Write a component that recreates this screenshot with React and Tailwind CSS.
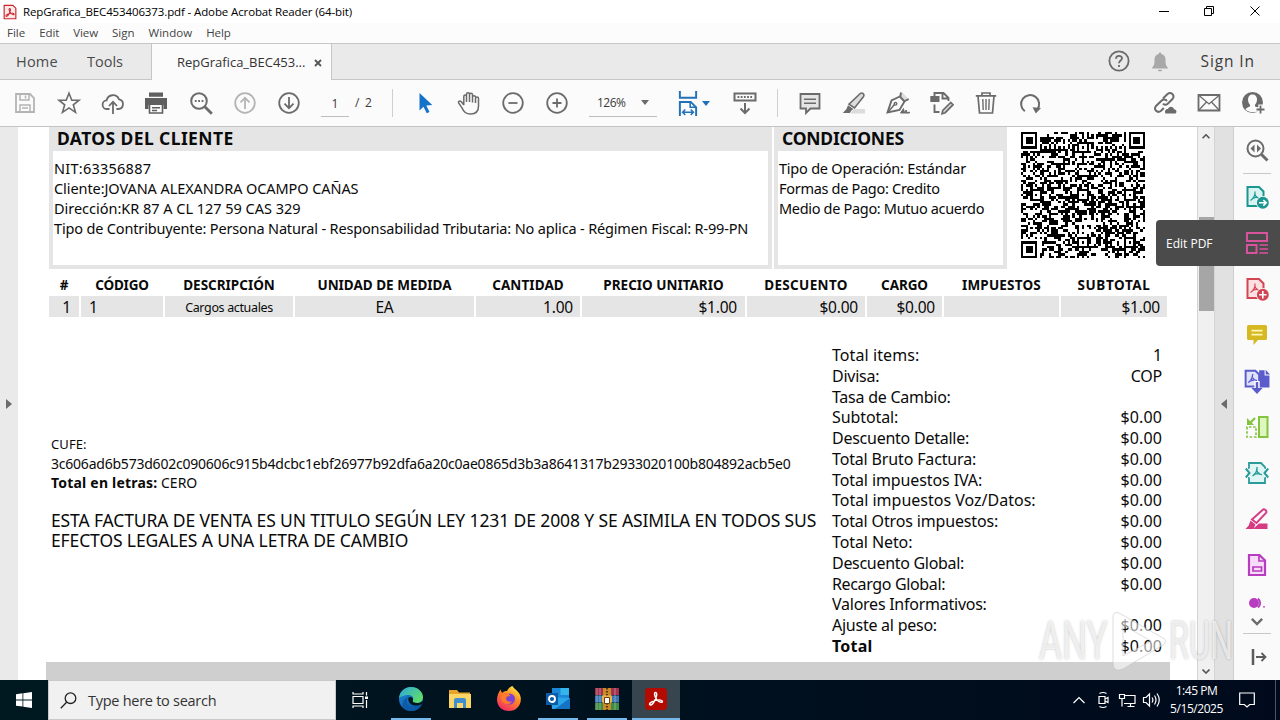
import clsx from 'clsx';

const Icon = ({ size = 24, className, children, ...rest }) => (
  <svg
    width={size}
    height={size}
    viewBox="0 0 24 24"
    fill="none"
    stroke="currentColor"
    strokeWidth="1.8"
    className={clsx('shrink-0', className)}
    {...rest}
  >
    {children}
  </svg>
);

/* ---------- Toolbar icons ---------- */

const SaveIcon = () => (
  <Icon className="text-[#b4b4b4]">
    <path d="M3 3h14l4 4v14H3z" />
    <path d="M7 3v6h9V3M12.500 4.500v3M7 21v-7h10v7M9 17h6" strokeWidth="1.500" />
  </Icon>
);

const StarIcon = () => (
  <Icon className="text-[#6b6b6b]">
    <path d="M12 2.200l2.800 7h7.300l-5.800 4.600 2.200 7.600L12 16.900l-6.500 4.500 2.200-7.600L1.900 9.200h7.300z" strokeWidth="1.600" />
  </Icon>
);

const CloudUpIcon = () => (
  <Icon className="text-[#6b6b6b]">
    <path d="M8.500 18H6.200a4.300 4.300 0 0 1-.6-8.600A6.500 6.500 0 0 1 18 8.300a4.900 4.900 0 0 1-.6 9.700h-2" />
    <path d="M12 23V11M8 15l4-4.300 4 4.300" />
  </Icon>
);

const PrintIcon = () => (
  <Icon className="mr-0.5 text-[#5f5f5f]">
    <path d="M5 1.500h14v4.300H5zM1 7h22v11h-3.500v-4h-15v4H1z" fill="currentColor" stroke="none" />
    <path d="M5.500 14v8h13v-8M8 16.800h8M8 19.500h5" strokeWidth="1.600" />
  </Icon>
);

const FindIcon = () => (
  <Icon className="text-[#6b6b6b]">
    <circle cx="10" cy="10" r="7.800" strokeWidth="2" />
    <path d="M15.800 15.800l7 7" strokeWidth="2.800" />
    <path d="M5.800 10h1.800M9.200 10H11M12.600 10h1.800" strokeWidth="1.800" />
  </Icon>
);

const CircleArrowIcon = ({ up, className }) => (
  <Icon className={className}>
    <circle cx="12" cy="12" r="9.800" />
    <path d={up ? 'M12 18V7M7.500 11.300L12 6.800l4.500 4.500' : 'M12 6v11M7.500 12.700l4.500 4.500 4.500-4.500'} />
  </Icon>
);

const PointerIcon = () => (
  <Icon className="text-[#1473c8]">
    <path d="M6.500 2v17.500l4-3.800 3.200 6.500 2.800-1.300-3.200-6.300 6-.6z" fill="currentColor" stroke="none" />
  </Icon>
);

const HandIcon = () => (
  <Icon className="text-[#6b6b6b]">
    <path
      d="M6.800 14V5.500c0-2 2.700-2 2.700 0V11 3.300c0-2 3-2 3 0V11 3.800c0-2 3-2 3 0V11.500 6.300c0-2 3-2 3 0 M21.500 8.500V15c0 5.500-3.500 8-7.800 8-5.200 0-7-2.500-8.900-6.400L1.600 12c-.7-1.800 1.500-2.600 2.700-1.200L6.800 14M18.500 12V7.500c0-2 3-2 3 0v1.500"
      strokeWidth="1.500"
    />
  </Icon>
);

const ZoomStepIcon = ({ plus }) => (
  <Icon className="text-[#6b6b6b]">
    <circle cx="12" cy="12" r="9.800" />
    <path d={plus ? 'M7.500 12h9M12 7.500v9' : 'M7.500 12h9'} />
  </Icon>
);

const FitWidthIcon = () => (
  <Icon className="text-[#2071b8]" size={26}>
    <path d="M4.500 1v6.200h15V1M4.500 24V11h10l5 5v8" />
    <path d="M14 11v5h5.500M7.500 20.500h9M9.500 18l-2.500 2.500L9.500 23M14.500 18l2.500 2.500-2.500 2.500" strokeWidth="1.400" />
  </Icon>
);

const KeyboardIcon = () => (
  <Icon className="text-[#6b6b6b]">
    <path d="M1.500 2.500h21v7h-21z" strokeWidth="2" />
    <path d="M4.500 6h15" strokeWidth="2" strokeDasharray="1.800 1.400" />
    <path d="M12 12v9.500M7.500 17.500l4.500 4.500 4.500-4.500" strokeWidth="2" />
  </Icon>
);

const CommentIcon = () => (
  <Icon className="text-[#6b6b6b]">
    <path d="M2.500 3h19v14.500h-9L8 22v-4.500H2.500z" fill="#e4e4e4" />
    <path d="M6 8.300h12M6 12.300h12" strokeWidth="1.400" />
  </Icon>
);

const HighlightIcon = () => (
  <Icon className="text-[#6b6b6b]">
    <path d="M12 18h11v4.500H8z" fill="#dcdcdc" stroke="none" />
    <path d="M18.300 2.500c1.800-1.500 4.700 1 3.300 3L12.500 17 7 13.200z" fill="#dcdcdc" strokeWidth="1.600" />
    <path d="M6 14.300l5.300 3.800-2 1.700-1.500 2.200H.8l3.500-3.800z" fill="currentColor" stroke="none" />
  </Icon>
);

const SignIcon = () => (
  <Icon className="text-[#6b6b6b]">
    <path d="M16 1l-1.500 4.500 4.500 5L22.500 8z" fill="#dcdcdc" stroke="none" />
    <path d="M15 1.500l-.7 4M18.700 10l4-1.800" strokeWidth="1.900" />
    <path d="M13.800 5.500L5.500 9.500 1.500 21.500 13.500 19l5-8.500z" strokeWidth="1.900" />
    <path d="M2 21l6.500-7.500" strokeWidth="1.600" />
    <circle cx="9.500" cy="12.800" r="1.300" strokeWidth="1.400" />
    <path d="M14.500 22l3-4.500.8 4 2-2.500.8 3 2.400-1v1z" fill="currentColor" strokeWidth="1" />
  </Icon>
);

const EditPageIcon = () => (
  <Icon className="text-[#6b6b6b]">
    <path d="M.3 5h9.200v6H.3z" fill="currentColor" stroke="none" />
    <path d="M4.500 5V2h9l5 5v3M12.500 2v5.500h6M4.500 13.500V21h5" strokeWidth="1.900" />
    <path d="M20.800 11.500l2.200 2.200-7.800 8-3.200 1 .8-3.300z" fill="#dcdcdc" strokeWidth="1.700" />
  </Icon>
);

const TrashIcon = () => (
  <Icon className="text-[#6b6b6b]">
    <path d="M1.800 4.800h20.400M8 4.500V2h8v2.500M4 5l1.500 17h13L20 5" strokeWidth="1.700" />
    <path d="M8.800 8l.4 11M12 8v11M15.200 8l-.4 11" strokeWidth="1.400" />
  </Icon>
);

const RotateIcon = () => (
  <Icon className="text-[#6b6b6b]">
    <path d="M6.800 20.300A9 9 0 1 1 19.300 18.500" strokeWidth="2" />
    <path d="M14.500 16.200l8.500.8-5.200 5.600z" fill="currentColor" stroke="none" />
  </Icon>
);

const LinkCloudIcon = () => (
  <Icon className="text-[#6b6b6b]">
    <path d="M10 7.500l4.500-4.500c3.500-2.800 7.800 1.300 5 5l-4.800 4.700c-1.500 1.300-3.500 1-4.800 0" strokeWidth="2" />
    <path d="M14 10c-1.500-1.800-4-1.800-5.500-.3L3 15c-2.700 3.500 1.300 7.500 4.800 5l3-3" strokeWidth="2" />
    <path d="M12.500 22.500c-1.500-2.800.8-4.800 2.500-4.500 1-3.300 5.500-3 6 .3 3 .2 3 3.500 1.500 4.200z" fill="currentColor" stroke="none" />
  </Icon>
);

const MailIcon = () => (
  <Icon className="text-[#6b6b6b]">
    <path d="M1.500 4h21v15.500h-21z" />
    <path d="M2 4.500l10 8.500 10-8.500M2 19l7.500-8M22 19l-7.500-8" strokeWidth="1.300" />
  </Icon>
);

const AddUserIcon = () => (
  <Icon className="text-[#6b6b6b]">
    <circle cx="11.500" cy="11.500" r="10.500" fill="currentColor" stroke="none" />
    <path
      d="M11.500 3.500c3 0 4.500 2 4.500 5 0 2.300-.8 4-2 5.200v1.800c2 .8 4 1.500 4.500 3-4 3.500-10 3.500-14 0 .5-1.500 2.500-2.200 4.500-3v-1.800C7.800 12.500 7 10.800 7 8.500c0-3 1.500-5 4.500-5z"
      fill="#fbfbfb"
      stroke="none"
    />
    <path d="M14 18.500h10M19.500 13.500v10" stroke="#fbfbfb" strokeWidth="4.500" />
    <path d="M15.500 18.500h8M19.500 14.500v8" />
  </Icon>
);

/* ---------- Right rail icons ---------- */

const PdfSheet = ({ fill = 'none' }) => (
  <>
    <path d="M2.500 2h11.500l4.500 4.500V21h-16z" fill={fill} strokeWidth="2" />
    <path d="M10 6.500c.3 3.500-1.300 7-4.500 9M10 9.500c.8 2.300 2.800 3.800 5 4M7.500 13.500l5-1.500" strokeWidth="1.200" />
  </>
);

const BadgedPdfIcon = ({ fill, badge, className }) => (
  <Icon className={className}>
    <PdfSheet fill={fill} />
    <circle cx="17.800" cy="17.800" r="6.800" fill="#fafafa" stroke="none" />
    <circle cx="17.800" cy="17.800" r="6" fill="currentColor" stroke="none" />
    <path d={badge} stroke="#fff" strokeWidth="1.600" />
  </Icon>
);

const ReplaceViewIcon = () => (
  <Icon className="text-[#6b6b6b]">
    <circle cx="10.500" cy="10.500" r="8" strokeWidth="2" />
    <path d="M16.500 16.500l6 6" strokeWidth="3" />
    <path d="M9.500 6.500v8l-4-4zM12 6.500v8l4-4z" fill="currentColor" stroke="none" />
  </Icon>
);

const EditPdfIcon = () => (
  <Icon className="text-[#d8529e]">
    <path d="M2 2h20v8H2zM2 14h9.500v8H2z" strokeWidth="2" />
    <path d="M14.500 14H23M14.500 18H23M14.500 22H23" strokeWidth="1.500" />
  </Icon>
);

const NoteIcon = () => (
  <Icon className="text-[#d5b822]">
    <path d="M3.500 2h17q1.500 0 1.500 1.500v12q0 1.500-1.500 1.500H13l-4.500 5V17h-5Q2 17 2 15.500v-12Q2 2 3.500 2z" fill="currentColor" stroke="none" />
    <path d="M6.500 7.700h11M6.500 11.700h11" stroke="#fff7b8" />
  </Icon>
);

const CombineIcon = () => (
  <Icon className="text-[#5b5ccb]" size={26}>
    <path d="M14 2h5v5h4.500v11H14z M20 1.500V6h4z" fill="currentColor" stroke="none" />
    <path d="M1.500 2.500h9L14 6v11H1.500z" fill="#e0e2fa" />
    <path d="M8 5.500c0 3.500-1.500 6-4 8M8 9c.8 1.800 2 2.500 4 2.700M5.500 12l4-1" strokeWidth="1.200" />
    <path d="M12 12v9" stroke="#fafafa" strokeWidth="5" />
    <path d="M12 13v7" strokeWidth="2.200" />
    <path d="M6.800 18.500h10.400L12 24z" fill="currentColor" stroke="none" />
  </Icon>
);

const OrganizeIcon = () => (
  <Icon className="text-[#84c340]">
    <path d="M14 2h8.500v20H14z" fill="#def6bf" strokeWidth="2" />
    <path d="M2 12v10h9V12z" strokeWidth="1.700" strokeDasharray="2.500 1.700" />
    <path d="M2 3v7h7L6.800 7.700l4-4-1.500-1.500-4 4z" fill="currentColor" stroke="none" />
  </Icon>
);

const CompressIcon = () => (
  <Icon className="text-[#2a9b98]">
    <path d="M4 8V2h12l4 4v2M4 16v6h16v-6" fill="#e0f6f4" />
    <path d="M4 7.500h16v9H4z" fill="#e0f6f4" stroke="none" />
    <path d="M.8 7.500L4.500 12 .8 16.500M23.200 7.500L19.500 12l3.700 4.500" strokeWidth="2" />
    <path d="M12 6c.4 3.500-1.700 7-4.500 9M12 10c.8 2 2.500 3.500 5 3.600M9 13.200l6-.8" strokeWidth="1.400" />
  </Icon>
);

const RedactIcon = () => (
  <Icon className="text-[#d63a83]">
    <path d="M14 16.500h8.500V22H8z" fill="currentColor" stroke="none" />
    <path d="M17.500 3c1.800-1.700 5 .8 3.500 3L11.500 16 7 12.500z" strokeWidth="1.900" />
    <path d="M5.500 13.500l5 4L8.500 22H.5l3.200-3.500z" fill="currentColor" stroke="none" />
  </Icon>
);

const FormIcon = () => (
  <Icon className="text-[#b83cc0]">
    <path d="M4 2h10.500L20 7.500V22H4z" fill="#f7dcf9" strokeWidth="2.200" />
    <path d="M14 2v6h6M8 14h8.500v4H8z" strokeWidth="1.700" />
  </Icon>
);

const MoreToolIcon = () => (
  <svg width="18" height="12" viewBox="0 0 18 12" className="text-[#b83cc0]">
    <circle cx="6" cy="6" r="5" fill="currentColor" />
    <path d="M10 1.500q4.500 4.500 0 9" fill="none" stroke="currentColor" strokeWidth="1.800" />
    <circle cx="16" cy="9.800" r=".9" fill="currentColor" />
  </svg>
);

const RAIL = [
  <BadgedPdfIcon key="export" className="text-[#1c9690]" fill="#d9f3f1" badge="M14 17.800h7M18.300 15l2.900 2.800-2.900 2.800" />,
  <EditPdfIcon key="edit" />,
  <BadgedPdfIcon key="create" className="text-[#d24653]" fill="#fde0e2" badge="M14.100 17.800h7.400M17.800 14.100v7.400" />,
  <NoteIcon key="note" />,
  <CombineIcon key="combine" />,
  <OrganizeIcon key="organize" />,
  <CompressIcon key="compress" />,
  <RedactIcon key="redact" />,
  <FormIcon key="form" />,
];

/* ---------- QR code ---------- */

const QR_SIZE = 53;

// true / false inside function patterns, null for data modules
function functionModule(x, y) {
  const corners = [[0, 0], [QR_SIZE - 7, 0], [0, QR_SIZE - 7]];
  for (const [cx, cy] of corners) {
    const d = Math.max(Math.abs(x - cx - 3), Math.abs(y - cy - 3));
    if (d <= 4) return d === 3 || d <= 1;
  }
  for (const [cx, cy] of [[26, 26], [46, 46], [26, 46], [46, 26], [26, 6], [6, 26]]) {
    const d = Math.max(Math.abs(x - cx), Math.abs(y - cy));
    if (d <= 2) return d !== 1;
  }
  if (x === 6 || y === 6) return (x + y) % 2 === 0;
  return null;
}

function qrPath() {
  let seed = 453406373;
  let d = '';
  for (let y = 0; y < QR_SIZE; y++) {
    for (let x = 0; x < QR_SIZE; x++) {
      seed = (Math.imul(seed, 1664525) + 1013904223) >>> 0;
      const on = functionModule(x, y) ?? seed >>> 16 & 1;
      if (on) d += `M${x} ${y}h1v1h-1z`;
    }
  }
  return d;
}

const QrCode = () => (
  <svg width="124" height="126" viewBox={`0 0 ${QR_SIZE} ${QR_SIZE}`} preserveAspectRatio="none">
    <path d={qrPath()} fill="#000" shapeRendering="crispEdges" />
  </svg>
);

/* ---------- Window chrome ---------- */

const AcrobatMark = ({ className }) => (
  <path
    className={className}
    d="M11.500 5c2 0 1.500 4-.5 8-1.500 3-4 6-5.500 5.500-2-1 1.500-4 6.500-5 4-.8 7-.3 7 1.200 0 1.800-3.500.8-6-2S9.500 5 11.500 5z"
    fill="none"
  />
);

function TitleBar() {
  return (
    <header className="flex h-[23px] items-center bg-white text-black">
      <svg width="14" height="16" viewBox="0 0 24 26" className="ml-[3px]">
        <path d="M2 1.500h15l5 5v18H2z" fill="#fde9e9" stroke="#c8262c" strokeWidth="2" />
        <g transform="translate(0 2)" stroke="#c8262c" strokeWidth="1.800"><AcrobatMark /></g>
      </svg>
      <span className="ml-1.5 text-[11.500px] tracking-[-0.12px]">RepGrafica_BEC453406373.pdf - Adobe Acrobat Reader (64-bit)</span>
      <svg width="104" height="12" viewBox="0 0 104 12" fill="none" stroke="#000" className="mr-[18px] -mt-0.5 ml-auto">
        <path d="M1 6.500h10M46.500 3.500h7v7h-7zM48.500 3.500v-2h7v7h-2M92.500 1.500l9 9M101.500 1.500l-9 9" />
      </svg>
    </header>
  );
}

function MenuBar() {
  return (
    <nav className="flex h-5 items-center gap-3.5 bg-[#fcfcfc] pl-[7px] text-[11.500px] text-[#444]">
      <span>File</span>
      <span className="tracking-[-0.1px]">Edit</span>
      <span className="tracking-[-0.1px]">View</span>
      <span>Sign</span>
      <span className="tracking-[0.05px]">Window</span>
      <span className="tracking-[-0.1px]">Help</span>
    </nav>
  );
}

function TabBar() {
  return (
    <div className="flex h-[37px] items-center border-y border-[#c6c6c6] bg-[#eaeaea] text-[#4a4a4a]">
      <span className="w-[71px] pl-4 text-[14.500px] tracking-[0.2px]">Home</span>
      <span className="w-20 pl-4 text-[14.500px]">Tools</span>
      <div className="-mb-0.5 flex h-[37px] w-[181px] items-center border-x border-[#c6c6c6] bg-[#fbfbfb] pl-[25px] text-[#333]">
        <span className="w-[137px] text-[13px]">RepGrafica_BEC453...</span>
        <svg width="8" height="8" viewBox="0 0 8 8" stroke="#555" strokeWidth="1.800"><path d="M1 1l6 6M7 1L1 7" /></svg>
      </div>
      <Icon className="-mt-0.5 ml-auto text-[#6b6b6b]">
        <circle cx="12" cy="12" r="9.600" />
        <path d="M9 9.800c0-4 6-3.600 6-.5 0 2.200-3 2.300-3 5M12 16v2" />
      </Icon>
      <Icon size={22} className="mr-[19px] ml-[18px] text-[#a8a8a8]">
        <path d="M12 1.500c1 0 1.500.6 1.500 1.800 3 .8 4.500 3 4.500 6 0 5 .5 7 3.200 9.700H2.800C5.500 16.300 6 14.300 6 9.300c0-3 1.500-5.200 4.500-6C10.500 2.100 11 1.500 12 1.500zM9.500 20.500h5c-.5 2.500-4.500 2.500-5 0z" fill="currentColor" stroke="none" />
      </Icon>
      <span className="mr-[25px] ml-[11px] text-[15.500px] tracking-[0.9px] text-[#3c3c3c]">Sign In</span>
    </div>
  );
}

const Tool = ({ children }) => <div className="flex w-11 justify-center">{children}</div>;
const Divider = ({ className }) => <div className={clsx('h-7 w-px bg-[#cfcfcf]', className)} />;
const Caret = ({ className }) => (
  <svg width="8" height="5" viewBox="0 0 8 5" className={className}><path d="M0 0h8L4 5z" fill="currentColor" /></svg>
);

function Toolbar() {
  return (
    <div className="flex h-[47px] items-center border-b border-[#c4c4c4] bg-[#fbfbfb] pl-[3px] text-[#3a3a3a]">
      <Tool><SaveIcon /></Tool>
      <Tool><StarIcon /></Tool>
      <Tool><CloudUpIcon /></Tool>
      <Tool><PrintIcon /></Tool>
      <Tool><FindIcon /></Tool>
      <Tool><CircleArrowIcon up className="text-[#b4b4b4]" /></Tool>
      <Tool><CircleArrowIcon className="text-[#6b6b6b]" /></Tool>
      <div className="ml-2.5 h-[27px] w-7 border-b border-[#bdbdbd] text-center text-xs leading-[27px]">1</div>
      <span className="ml-1.5 w-[37px] text-xs tracking-[1.2px]">/ 2</span>
      <Divider />
      <div className="ml-[10px] flex">
        <Tool><PointerIcon /></Tool>
        <Tool><HandIcon /></Tool>
        <Tool><ZoomStepIcon /></Tool>
        <Tool><ZoomStepIcon plus /></Tool>
      </div>
      <div className="ml-2.5 flex h-[27px] w-[68px] items-center justify-between border-b border-[#bdbdbd] px-2 text-xs">
        <span className="tracking-[-0.5px]">126%</span>
        <Caret className="text-[#6b6b6b]" />
      </div>
      <div className="ml-[18px] flex w-[48px] items-center gap-px">
        <FitWidthIcon />
        <Caret className="text-[#2071b8]" />
      </div>
      <Tool><KeyboardIcon /></Tool>
      <Divider className="ml-[10px]" />
      <div className="ml-[10px] flex">
        <Tool><CommentIcon /></Tool>
        <Tool><HighlightIcon /></Tool>
        <Tool><SignIcon /></Tool>
        <Tool><EditPageIcon /></Tool>
        <Tool><TrashIcon /></Tool>
        <Tool><RotateIcon /></Tool>
      </div>
      <div className="mr-[5px] ml-auto flex">
        <Tool><LinkCloudIcon /></Tool>
        <Tool><MailIcon /></Tool>
        <Tool><AddUserIcon /></Tool>
      </div>
    </div>
  );
}

/* ---------- Invoice page ---------- */

function InfoBox({ title, titleClass, className, children }) {
  return (
    <section className={clsx('h-[142px] border-4 border-t-0 border-[#e5e5e5] text-[14.500px] leading-5', className)}>
      <h2 className={clsx('h-6 bg-[#e5e5e5] text-[17.500px] leading-[22px] font-bold', titleClass)}>{title}</h2>
      <div className="pt-[7px] pl-px whitespace-nowrap">{children}</div>
    </section>
  );
}

const COLUMNS = [
  { head: '#', value: '1', width: 'w-[30px]', headClass: '', cell: 'text-right pr-2' },
  { head: 'CÓDIGO', value: '1', width: 'w-[82px]', headClass: 'tracking-[-0.2px]', cell: 'pl-2' },
  { head: 'DESCRIPCIÓN', value: 'Cargos actuales', width: 'w-[128px]', headClass: 'tracking-[0px]', cell: 'text-center', small: true },
  { head: 'UNIDAD DE MEDIDA', value: 'EA', width: 'w-[179px]', headClass: 'tracking-[0px]', cell: 'text-center' },
  { head: 'CANTIDAD', value: '1.00', width: 'w-[104px]', headClass: 'tracking-[0.1px]', cell: 'text-right pr-[7px]' },
  { head: 'PRECIO UNITARIO', value: '$1.00', width: 'w-[163px]', headClass: 'tracking-[0px]', cell: 'text-right pr-2' },
  { head: 'DESCUENTO', value: '$0.00', width: 'w-[118px]', headClass: 'tracking-[0.35px]', cell: 'text-right pr-[7px]' },
  { head: 'CARGO', value: '$0.00', width: 'w-[75px]', headClass: 'tracking-[-0.1px]', cell: 'text-right pr-[7px]' },
  { head: 'IMPUESTOS', value: '', width: 'w-[115px]', headClass: 'tracking-[0.2px]', cell: '' },
  { head: 'SUBTOTAL', value: '$1.00', width: 'w-[106px]', headClass: 'tracking-[0.6px]', cell: 'text-right pr-[7px]' },
];

function ItemsTable() {
  return (
    <div className="mt-[7px] ml-[31px] flex gap-0.5 whitespace-nowrap">
      {COLUMNS.map((col) => (
        <div key={col.head} className={clsx('shrink-0', col.width)}>
          <div className={clsx('h-5 text-center text-[13.500px] leading-[18px] font-bold', col.headClass)}>{col.head}</div>
          <div
            className={clsx(
              'h-[21px] bg-[#e5e5e5] leading-[23px]',
              col.small ? 'text-[12.500px] tracking-[-0.35px]' : 'text-[15.500px] tracking-[-0.2px]',
              col.cell
            )}
          >
            {col.value}
          </div>
        </div>
      ))}
    </div>
  );
}

const TOTALS = [
  { label: 'Total items:', value: '1', tracking: 'tracking-[0.08px]' },
  { label: 'Divisa:', value: 'COP', tracking: 'tracking-[-0.25px]' },
  { label: 'Tasa de Cambio:', value: '', tracking: 'tracking-[-0.25px]' },
  { label: 'Subtotal:', value: '$0.00', tracking: 'tracking-[-0.1px]' },
  { label: 'Descuento Detalle:', value: '$0.00', tracking: 'tracking-[-0.25px]' },
  { label: 'Total Bruto Factura:', value: '$0.00', tracking: 'tracking-[-0.15px]' },
  { label: 'Total impuestos IVA:', value: '$0.00', tracking: 'tracking-[-0.1px]' },
  { label: 'Total impuestos Voz/Datos:', value: '$0.00', tracking: 'tracking-[0px]' },
  { label: 'Total Otros impuestos:', value: '$0.00', tracking: 'tracking-[-0.15px]' },
  { label: 'Total Neto:', value: '$0.00', tracking: 'tracking-[-0.1px]' },
  { label: 'Descuento Global:', value: '$0.00', tracking: 'tracking-[-0.3px]' },
  { label: 'Recargo Global:', value: '$0.00', tracking: 'tracking-[-0.35px]' },
  { label: 'Valores Informativos:', value: '', tracking: 'tracking-[-0.25px]' },
  { label: 'Ajuste al peso:', value: '$0.00', tracking: 'tracking-[-0.25px]' },
  { label: 'Total', value: '$0.00', tracking: 'tracking-[0.2px]', bold: true },
];

function InvoicePage() {
  return (
    <main className="flex h-full w-[1179px] shrink-0 flex-col overflow-hidden bg-white font-['Noto_Sans',sans-serif] text-[#0a0a0a]">
      <div className="flex pl-[31px]">
        <InfoBox title="DATOS DEL CLIENTE" titleClass="pl-1 tracking-[0.4px]" className="w-[723px]">
          <p className="tracking-[0.25px]">NIT:63356887</p>
          <p className="tracking-[-0.08px]">Cliente:JOVANA ALEXANDRA OCAMPO CAÑAS</p>
          <p className="tracking-[-0.02px]">Dirección:KR 87 A CL 127 59 CAS 329</p>
          <p className="tracking-[-0.16px]">Tipo de Contribuyente: Persona Natural - Responsabilidad Tributaria: No aplica - Régimen Fiscal: R-99-PN</p>
        </InfoBox>
        <InfoBox title="CONDICIONES" titleClass="pl-1 tracking-[-0.2px]" className="ml-0.5 w-[233px]">
          <p className="tracking-[-0.22px]">Tipo de Operación: Estándar</p>
          <p className="tracking-[-0.3px]">Formas de Pago: Credito</p>
          <p className="tracking-[-0.32px]">Medio de Pago: Mutuo acuerdo</p>
        </InfoBox>
        <div className="pt-[5px] pl-3.5"><QrCode /></div>
      </div>

      <ItemsTable />

      <div className="mt-[28px] flex h-[317px] pl-[33px] whitespace-nowrap">
        <div className="w-[780px] pt-[89px]">
          <p className="text-[13px] leading-5 tracking-[0.1px]">CUFE:</p>
          <p className="text-[14px] leading-5 tracking-[-0.22px]">3c606ad6b573d602c090606c915b4dcbc1ebf26977b92dfa6a20c0ae0865d3b3a8641317b2933020100b804892acb5e0</p>
          <p className="text-[14px] leading-[18px]"><b className="tracking-[0.2px]">Total en letras:</b> CERO</p>
          <p className="mt-[18px] text-[17.500px] leading-5 tracking-[-0.12px]">
            ESTA FACTURA DE VENTA ES UN TITULO SEGÚN LEY 1231 DE 2008 Y SE ASIMILA EN TODOS SUS
            <br />
            EFECTOS LEGALES A UNA LETRA DE CAMBIO
          </p>
        </div>
        <div className="w-[331px] pl-px text-[16px] leading-[20.790px]">
          {TOTALS.map((row) => (
            <div key={row.label} className="flex h-[20.790px] justify-between">
              <span className={clsx(row.tracking, row.bold && 'font-bold')}>{row.label}</span>
              <span className={row.value.startsWith('$') ? 'tracking-[0.1px]' : 'tracking-[-0.25px]'}>{row.value}</span>
            </div>
          ))}
        </div>
      </div>
      <div className="mt-auto ml-7 h-[18px] w-[1124px] shrink-0 bg-[#cfcfcf]" />
    </main>
  );
}

/* ---------- Right side ---------- */

const Chevron = ({ up, className, width = 8 }) => (
  <svg width={width} height={width * 0.6} viewBox="0 0 10 6" fill="none" stroke="currentColor" strokeWidth="2" className={className}>
    <path d={up ? 'M.7 5.300L5 1l4.300 4.300' : 'M.7.7L5 5 9.300.7'} />
  </svg>
);

function ScrollBar() {
  return (
    <div className="flex w-[18px] shrink-0 flex-col items-center border-x border-[#d4d4d4] bg-[#f0f0f0] text-[#555]">
      <div className="flex h-[19px] items-center"><Chevron up /></div>
      <div className="mt-[71px] h-[94px] w-[15px] bg-[#a6a6a6]" />
      <div className="mt-auto flex h-[17px] items-center"><Chevron /></div>
    </div>
  );
}

function ToolRail() {
  return (
    <aside className="relative flex w-[47px] shrink-0 flex-col items-center border-l border-[#cfcfcf] bg-[#fafafa]">
      <div className="flex h-[46px] items-center"><ReplaceViewIcon /></div>
      <div className="h-px w-7 bg-[#c8c8c8]" />
      {RAIL.map((icon) =>
        icon.key === 'edit' ? (
          <div key="edit" className="relative flex h-[46px] w-full shrink-0 items-center justify-center bg-[#4b4b4b]">
            {icon}
            <div className="absolute top-0 right-[46px] flex h-[46px] w-[78px] items-center rounded-l bg-[#4b4b4b] pt-0.5 pl-2.5 text-[12px] text-white">
              Edit PDF
            </div>
          </div>
        ) : (
          <div key={icon.key} className="flex h-[46px] shrink-0 items-center">{icon}</div>
        )
      )}
      <div className="flex h-[23px] items-end pb-0.5"><MoreToolIcon /></div>
      <div className="flex h-[22px] items-center text-[#6b6b6b]"><Chevron width={12} /></div>
      <div className="h-px w-7 bg-[#c8c8c8]" />
      <div className="flex flex-1 items-center pl-1">
        <svg width="16" height="16" viewBox="0 0 16 16" fill="none" stroke="#5c5c5c" strokeWidth="1.800">
          <path d="M2 0v16" strokeWidth="2.500" />
          <path d="M5 8h9M10.500 4l4 4-4 4" />
        </svg>
      </div>
    </aside>
  );
}

function Watermark() {
  return (
    <div className="pointer-events-none absolute top-[608px] left-[1039px] flex h-[66px] w-[196px] items-center text-[54px] leading-none text-white/70 [text-shadow:0_0_3px_rgba(0,0,0,0.25)]">
      <span className="w-[70px] origin-left scale-x-[0.65] font-['Roboto',sans-serif]">ANY</span>
      <svg width="60" height="64" viewBox="0 0 60 64" fill="#fff" fillOpacity=".55" stroke="#bbb" strokeOpacity=".5" strokeWidth="1">
        <path d="M4 8q0-6 6-4l44 25q5 3 0 7L14 60q-10 4-10-6zM14 16v31l28-15z" fillRule="evenodd" />
      </svg>
      <span className="w-[62px] origin-left scale-x-[0.6] font-['Roboto',sans-serif]">RUN</span>
    </div>
  );
}

/* ---------- Taskbar ---------- */

const EdgeLogo = () => (
  <svg width="26" height="26" viewBox="0 0 26 26">
    <defs>
      <linearGradient id="edgeTop" x1="0" y1="0" x2="1" y2="0.600">
        <stop offset="0" stopColor="#2ba7e0" />
        <stop offset="1" stopColor="#5fdc6a" />
      </linearGradient>
      <linearGradient id="edgeBody" x1="0" y1="0" x2="0.800" y2="1">
        <stop offset="0" stopColor="#1d8fdc" />
        <stop offset="1" stopColor="#0c4f9c" />
      </linearGradient>
    </defs>
    <circle cx="13" cy="13" r="12" fill="url(#edgeBody)" />
    <path d="M1 12C2 5 7 1 13 1c7 0 12 5 12 10 0 4-3 6-6.500 6-3 0-4.500-1-3.500-3 1-2.500-1-5-4.500-5C6 9 2 11 1 12z" fill="url(#edgeTop)" />
    <path d="M10 11c-3 5 0 11 6 11 3.500 0 6-1.500 8-4-3 7-11 9-17 5-4-3-3-9 3-12z" fill="#0d5aa8" />
    <path d="M10.500 11.500c-1 4 2 8 7 8 3 0 5-.8 6.500-1.800l1.500-3C23 17 19 17.500 16 16.500c-2-.7-1-2-1-3.500 0-1-2-3-4.500-1.500z" fill="#001820" />
  </svg>
);

const FolderLogo = () => (
  <svg width="24" height="22" viewBox="0 0 24 22">
    <path d="M1 2h8l2 2.500h11V20H1z" fill="#e5a52d" />
    <path d="M1 6h22v14H1z" fill="#fbd667" />
    <path d="M6 20v-8q0-2 2-2h8q2 0 2 2v8h-3v-5H9v5z" fill="#3f8fd0" />
  </svg>
);

const FirefoxLogo = () => (
  <svg width="26" height="26" viewBox="0 0 26 26">
    <defs>
      <linearGradient id="ffx" x1="0.800" y1="0" x2="0.200" y2="1">
        <stop offset="0" stopColor="#fff04a" />
        <stop offset="0.400" stopColor="#ff8a22" />
        <stop offset="1" stopColor="#f2246b" />
      </linearGradient>
    </defs>
    <path d="M16.500 0c1 3 7.500 5 8.300 12 .5 8-5 13-11.800 13S1 20.500 1 13.500C1 9 3 6 4.500 3.500L6 7c1.500-1.500 3-2 5-2 1.500-3 3-4 5.500-5z" fill="url(#ffx)" />
    <circle cx="13.500" cy="13" r="5.500" fill="#7a42d6" />
    <path d="M6 8c3-1.500 7-1 8.500 2-2 .2-4 .5-4.500 2.500 0 2.500 3 4 6 3-2 3.500-8 3.500-10-.5C5 12 5 10 6 8z" fill="#ff7a2a" />
  </svg>
);

const OutlookLogo = () => (
  <svg width="26" height="24" viewBox="0 0 26 24">
    <path d="M7 1h17v14H7z" fill="#1a86d8" />
    <path d="M15.500 1H24v7h-8.500z" fill="#35b5ee" />
    <path d="M6 10l19 1v11H7z" fill="#2aa5ea" />
    <path d="M25 11v11H10z" fill="#1473c4" />
    <path d="M1 6h12v12H1z" fill="#0a5ba8" />
    <circle cx="7" cy="12" r="3" fill="none" stroke="#fff" strokeWidth="1.900" />
  </svg>
);

const WinrarLogo = () => (
  <svg width="26" height="24" viewBox="0 0 26 24">
    <path d="M1 1h24v7H1z" fill="#a8304f" />
    <path d="M1 8.500h24v7H1z" fill="#3b78b8" />
    <path d="M1 16h24v7H1z" fill="#3f8d45" />
    <path d="M3 1v22M6 1v22M21 1v22" stroke="#cfd6d0" strokeOpacity=".5" />
    <path d="M9 1h8v22H9z" fill="#c98b2a" />
    <path d="M13 1v22" stroke="#5b3510" strokeWidth="2" strokeDasharray="1.500 1.500" />
    <path d="M8 8.500h10v7H8z" fill="#e9b44c" />
    <path d="M10.500 10.500h5v6h-5z" fill="#fff" stroke="#6b4010" />
  </svg>
);

const AcrobatLogo = () => (
  <svg width="22" height="22" viewBox="0 0 24 24">
    <rect width="24" height="24" rx="4" fill="#b30b00" />
    <g stroke="#fff" strokeWidth="1.600"><AcrobatMark /></g>
  </svg>
);

const APPS = [
  { name: 'edge', logo: <EdgeLogo />, open: true },
  { name: 'explorer', logo: <FolderLogo /> },
  { name: 'firefox', logo: <FirefoxLogo /> },
  { name: 'outlook', logo: <OutlookLogo />, open: true },
  { name: 'winrar', logo: <WinrarLogo />, open: true },
];

function Taskbar() {
  return (
    <footer className="flex h-10 bg-linear-to-r from-[#001820] to-[#000a1c] text-white">
      <div className="flex w-12 items-center justify-center">
        <svg width="16" height="16" viewBox="0 0 16 16" fill="#fff">
          <path d="M0 2.200l6.500-.9v6.200H0zM7.300 1.200L16 0v7.500H7.300zM0 8.400h6.500v6.200L0 13.700zM7.300 8.400H16V16l-8.700-1.200z" />
        </svg>
      </div>
      <div className="flex w-72 items-center border border-[#c9c9c9] bg-[#f1f1f1] pl-[11px] text-[#333]">
        <svg width="17" height="17" viewBox="0 0 17 17" fill="none" stroke="#222" strokeWidth="1.300">
          <circle cx="10.500" cy="6.200" r="5.300" />
          <path d="M6.800 10L.8 16.200" />
        </svg>
        <span className="mt-px ml-[11px] text-[14.500px] tracking-[-0.27px]">Type here to search</span>
      </div>
      <div className="flex w-[50px] items-center justify-center pr-px">
        <svg width="17" height="16" viewBox="0 0 17 16" fill="none" stroke="#fff" strokeWidth="1.200">
          <path d="M1 4.500h10v7H1zM1 0v2h10V0M1 16v-2h10v2M14.500 0v3.500M14.500 8v8" />
          <path d="M13 4.500h3v2.500h-3z" fill="#fff" stroke="none" />
        </svg>
      </div>
      {APPS.map((app) => (
        <div key={app.name} className="flex w-[49px] justify-center">
          <div className={clsx('flex w-10 items-center justify-center border-b-2', app.open ? 'border-[#76b9ed]' : 'border-transparent')}>
            {app.logo}
          </div>
        </div>
      ))}
      <div className="ml-px flex w-12 items-center justify-center border-b-2 border-[#76b9ed] bg-[#36454e]"><AcrobatLogo /></div>

      <div className="ml-auto flex items-center">
        <svg width="90" height="20" viewBox="0 0 90 20" fill="none" stroke="#fff" strokeWidth="1.200">
          <path d="M1.500 13L7 7.500l5.500 5.500" />
          <path d="M27 6.500h6v7h-6zM33 9l3-1.500v5L33 11M27.500 3.500q3.500-2 7 0M27.500 16.500q3.500 2 7 0" />
          <path d="M52 5.500h11v8H52M55.500 16.500h7M58.500 13.500v3M47.500 4.500h5v4h-5zM50 8.500v8" />
          <path d="M71.500 7.500h2.500l3.500-3.500v12L74 12.500h-2.500zM80 7.500q1.800 2.500 0 5M82.500 5.500q3 4.500 0 9M85 3.500q4.500 6.500 0 13" />
        </svg>
        <div className="w-[69px] text-center text-[12px] leading-[18px] tracking-[-0.45px]">
          <p>1:45 PM</p>
          <p>5/15/2025</p>
        </div>
        <svg width="16" height="16" viewBox="0 0 16 16" fill="none" stroke="#fff" strokeWidth="1.200" className="mr-5 ml-2">
          <path d="M.7 1h14.600v11.500h-4.600L8 15l-2.700-2.500H.7z" />
        </svg>
        <div className="mr-1 h-10 w-px bg-[#4a5560]" />
      </div>
    </footer>
  );
}

export default function App() {
  return (
    <div className="relative flex h-[720px] w-[1280px] flex-col overflow-hidden font-['Open_Sans','Noto_Sans',sans-serif]">
      <TitleBar />
      <MenuBar />
      <TabBar />
      <Toolbar />
      <div className="flex h-[553px] bg-[#eaeaea]">
        <div className="flex w-[18px] shrink-0 items-center pl-1.5">
          <svg width="6" height="10" viewBox="0 0 6 10"><path d="M0 0l6 5-6 5z" fill="#6b6b6b" /></svg>
        </div>
        <InvoicePage />
        <ScrollBar />
        <div className="flex w-[18px] shrink-0 items-center justify-center bg-[#e1e1e1]">
          <svg width="6" height="10" viewBox="0 0 6 10"><path d="M6 0L0 5l6 5z" fill="#6b6b6b" /></svg>
        </div>
        <ToolRail />
      </div>
      <Taskbar />
      <Watermark />
    </div>
  );
}
